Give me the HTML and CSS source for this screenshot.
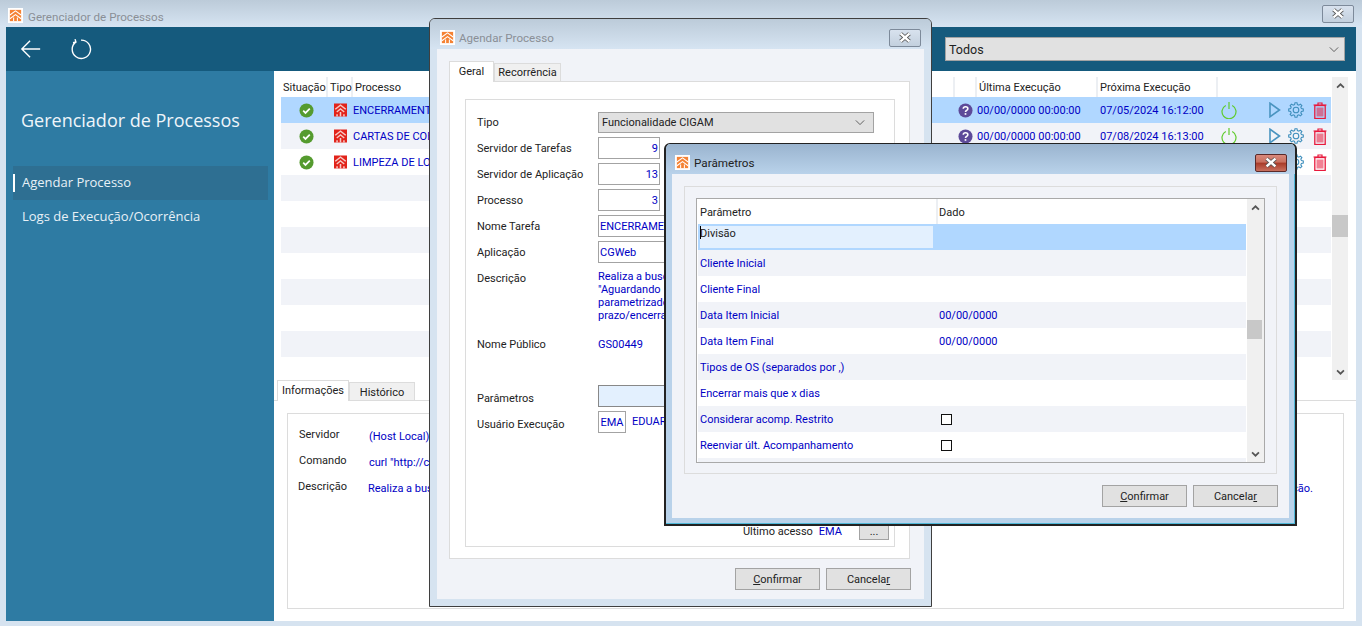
FILE: index.html
```html
<!DOCTYPE html>
<html lang="pt">
<head>
<meta charset="utf-8">
<title>Gerenciador de Processos</title>
<link rel="stylesheet" href="styles.css">
</head>
<body>
<svg class="defs" width="0" height="0" aria-hidden="true">
  <symbol id="logo" viewBox="0 0 16 16">
    <rect x="2" y="2" width="12" height="12" fill="#f58233"/>
    <path d="M2 7.500 8 3l6 4.500M2 11.500l6-4.500 6 4.500M6 10v4M10 10v4" fill="none" stroke="#fff" stroke-width="1.100"/>
  </symbol>
  <symbol id="house" viewBox="0 0 17 17">
    <rect width="17" height="17" fill="#e2231a"/>
    <path d="M8.500 1 1 7l1.300 1.300 6.200-5 6.200 5L16 7zM8.500 6 3 10.500l1.200 1.200 4.300-3.400 4.300 3.400 1.200-1.200zM7.500 11h2v6h-2zM3 14h2v3H3zM12 14h2v3h-2z" fill="#f6c9c5"/>
  </symbol>
  <symbol id="ok" viewBox="0 0 16 16">
    <circle cx="8" cy="8" r="7.500" fill="#559b2f"/>
    <path d="m4.500 8.200 2.400 2.400 4.600-4.600" fill="none" stroke="#fff" stroke-width="1.800"/>
  </symbol>
  <symbol id="q" viewBox="0 0 16 16">
    <circle cx="8" cy="8" r="7.500" fill="#5d4a99"/>
    <path d="M5.600 6.200C5.700 4.600 6.800 4 8 4c1.400 0 2.500.8 2.500 2.100 0 1.900-2.500 1.800-2.500 3.600" fill="none" stroke="#fff" stroke-width="1.700"/>
    <rect x="7.100" y="10.800" width="1.800" height="1.800" fill="#fff"/>
  </symbol>
  <symbol id="power" viewBox="0 0 16 18">
    <path d="M4.800 4.500a7 7 0 1 0 6.400 0M8 1v7" fill="none" stroke="#5fcb2c" stroke-width="1.200"/>
  </symbol>
  <symbol id="play" viewBox="0 0 12 16">
    <path d="M1 1.200 10.500 8 1 14.800z" fill="none" stroke="#4a94c0" stroke-width="1.600"/>
  </symbol>
  <symbol id="gear" viewBox="0 0 16 16">
    <path d="M6.600 2.600 7 .7h2l.4 1.900 1.430.59 1.620-1.060 1.420 1.420-1.060 1.620.59 1.430 1.900.4v2l-1.900.4-.59 1.430 1.060 1.620-1.420 1.420-1.620-1.060-1.430.59-.4 1.900H7l-.4-1.900-1.430-.59-1.620 1.060-1.420-1.420 1.060-1.620-.59-1.430-1.900-.4V7l1.900-.4.59-1.430-1.060-1.620 1.420-1.420 1.620 1.060z" fill="none" stroke="#3f8fbd" stroke-width="1.100"/>
    <circle cx="8" cy="8" r="2.800" fill="none" stroke="#3f8fbd" stroke-width="1.100"/>
  </symbol>
  <symbol id="trash" viewBox="0 0 14 17">
    <path d="M.5 3h13M5 3V1h4v2" fill="none" stroke="#e8193c" stroke-width="1.200"/>
    <rect x="1.800" y="3.500" width="10.400" height="13" fill="none" stroke="#e8193c" stroke-width="1.300"/>
    <rect x="3.500" y="5.500" width="7" height="9" fill="#e8193c" opacity=".55"/>
  </symbol>
  <symbol id="chev" viewBox="0 0 12 8">
    <path d="m1 1.500 5 5 5-5" fill="none" stroke="#555" stroke-width="1.100"/>
  </symbol>
  <symbol id="sb" viewBox="0 0 10 7">
    <path d="m1 5.500 4-4 4 4" fill="none" stroke="#555" stroke-width="2"/>
  </symbol>
  <symbol id="x" viewBox="0 0 14 10">
    <path d="m3 1.500 8 7m0-7-8 7" fill="none" stroke="#555" stroke-width="3.600"/>
    <path d="m3 1.500 8 7m0-7-8 7" fill="none" stroke="#fff" stroke-width="2.200"/>
  </symbol>
</svg>

<div class="desk">
  <main class="main">
    <header class="titlebar">
      <span class="logo"><svg class="ic-logo"><use href="#logo"/></svg></span>
      <span class="title-dim">Gerenciador de Processos</span>
      <button class="close-btn main-close"><svg class="ic-x"><use href="#x"/></svg></button>
    </header>
    <div class="topbar">
      <svg class="nav-ic" viewBox="0 0 24 24"><path d="M22 12H2M11 3l-9 9 9 9" fill="none" stroke="#fff" stroke-width="1.500"/></svg>
      <svg class="nav-ic reload" viewBox="0 0 24 24"><path d="M6.500 4.200A10 10 0 1 0 12 2.300M5.500 1.200l1 3.200-3.200.8" fill="none" stroke="#fff" stroke-width="1.500"/></svg>
      <div class="combo todos"><span>Todos</span><svg class="chev"><use href="#chev"/></svg></div>
    </div>
    <div class="body-row">
      <aside class="sidebar">
        <h1 class="side-title">Gerenciador de Processos</h1>
        <nav class="side-nav">
          <a class="side-item active">Agendar Processo</a>
          <a class="side-item">Logs de Execução/Ocorrência</a>
        </nav>
      </aside>
      <section class="content">
        <div class="table-wrap">
          <div class="ptable">
            <div class="prow phead">
              <span class="c-sit">Situação</span><span class="c-tipo">Tipo</span><span class="c-proc">Processo</span><span class="c-q"></span><span class="c-ult">Última Execução</span><span class="c-prox">Próxima Execução</span><span class="c-act"></span>
            </div>
            <div class="prow sel">
              <span class="c-sit"><svg class="ic-ok"><use href="#ok"/></svg></span><span class="c-tipo"><svg class="ic-house"><use href="#house"/></svg></span><span class="c-proc val">ENCERRAMENTO DE OS</span><span class="c-q"><svg class="ic-ok"><use href="#q"/></svg></span><span class="c-ult val">00/00/0000 00:00:00</span><span class="c-prox val">07/05/2024 16:12:00</span>
              <span class="c-act"><svg class="i-power"><use href="#power"/></svg><svg class="i-play"><use href="#play"/></svg><svg class="i-gear"><use href="#gear"/></svg><svg class="i-trash"><use href="#trash"/></svg></span>
            </div>
            <div class="prow alt">
              <span class="c-sit"><svg class="ic-ok"><use href="#ok"/></svg></span><span class="c-tipo"><svg class="ic-house"><use href="#house"/></svg></span><span class="c-proc val">CARTAS DE COBRANÇA</span><span class="c-q"><svg class="ic-ok"><use href="#q"/></svg></span><span class="c-ult val">00/00/0000 00:00:00</span><span class="c-prox val">07/08/2024 16:13:00</span>
              <span class="c-act"><svg class="i-power"><use href="#power"/></svg><svg class="i-play"><use href="#play"/></svg><svg class="i-gear"><use href="#gear"/></svg><svg class="i-trash"><use href="#trash"/></svg></span>
            </div>
            <div class="prow">
              <span class="c-sit"><svg class="ic-ok"><use href="#ok"/></svg></span><span class="c-tipo"><svg class="ic-house"><use href="#house"/></svg></span><span class="c-proc val">LIMPEZA DE LOGS</span><span class="c-q"></span><span class="c-ult"></span><span class="c-prox"></span>
              <span class="c-act"><svg class="i-power hide"><use href="#power"/></svg><svg class="i-play hide"><use href="#play"/></svg><svg class="i-gear"><use href="#gear"/></svg><svg class="i-trash"><use href="#trash"/></svg></span>
            </div>
            <div class="prow alt"></div><div class="prow"></div><div class="prow alt"></div><div class="prow"></div><div class="prow alt"></div><div class="prow"></div><div class="prow alt"></div>
          </div>
          <div class="scrollbar main-sb">
            <svg class="sb-ic"><use href="#sb"/></svg>
            <div class="thumb main-thumb"></div>
            <svg class="sb-ic down"><use href="#sb"/></svg>
          </div>
        </div>
        <div class="tabs info-tabs">
          <span class="tab on t-info">Informações</span><span class="tab t-hist">Histórico</span>
        </div>
        <div class="info-body">
          <div class="info-panel">
            <div class="info-row"><span class="info-lab">Servidor</span><span class="val">(Host Local)</span></div>
            <div class="info-row"><span class="info-lab">Comando</span><span class="val">curl "http://cgweb</span></div>
            <div class="info-row spread"><span class="info-lab">Descrição</span><span class="val grow">Realiza a busca</span><span class="val">ção.</span></div>
          </div>
        </div>
      </section>
    </div>
  </main>

  <div class="win win-agenda">
    <header class="win-title dim">
      <span class="logo"><svg class="ic-logo"><use href="#logo"/></svg></span>
      <span class="title-dim">Agendar Processo</span>
      <button class="close-btn"><svg class="ic-x"><use href="#x"/></svg></button>
    </header>
    <div class="win-body agenda-body">
      <div class="tabs agenda-tabs"><span class="tab on t-geral">Geral</span><span class="tab t-rec">Recorrência</span></div>
      <div class="tab-panel">
        <div class="group form">
          <div class="f-row"><label>Tipo</label><div class="combo tipo"><span>Funcionalidade CIGAM</span><svg class="chev"><use href="#chev"/></svg></div></div>
          <div class="f-row"><label>Servidor de Tarefas</label><div class="inp num">9</div></div>
          <div class="f-row"><label>Servidor de Aplicação</label><div class="inp num">13</div></div>
          <div class="f-row"><label>Processo</label><div class="inp num">3</div></div>
          <div class="f-row"><label>Nome Tarefa</label><div class="inp wide">ENCERRAMENTO</div></div>
          <div class="f-row"><label>Aplicação</label><div class="inp wide">CGWeb</div></div>
          <div class="f-row desc"><label>Descrição</label><div class="val lines">Realiza a busca<br>"Aguardando<br>parametrizado<br>prazo/encerra</div></div>
          <div class="f-row pub"><label>Nome Público</label><div class="val">GS00449</div></div>
          <div class="f-row low"><label>Parâmetros</label><div class="inp wide lit"></div></div>
          <div class="f-row low"><label>Usuário Execução</label><div class="inp ema">EMA</div><span class="val eduar">EDUARDO</span></div>
          <div class="last"><span>Último acesso</span><span class="val">EMA</span><button class="btn dots">...</button></div>
        </div>
      </div>
      <div class="actions"><button class="btn"><u>C</u>onfirmar</button><button class="btn">Cancela<u>r</u></button></div>
    </div>
  </div>

  <div class="win win-par">
    <header class="win-title">
      <span class="logo"><svg class="ic-logo"><use href="#logo"/></svg></span>
      <span class="title-on">Parâmetros</span>
      <button class="close-btn red"><svg class="ic-x"><use href="#x"/></svg></button>
    </header>
    <div class="win-body par-body">
      <div class="group par-group">
        <div class="pgrid">
          <div class="pg-main">
            <div class="pg-head"><span class="pg-a">Parâmetro</span><span class="pg-b">Dado</span></div>
            <div class="pg-row sel"><span class="pg-a editing"><i class="caret"></i>Divisão</span></div>
            <div class="pg-row alt"><span class="pg-a">Cliente Inicial</span></div>
            <div class="pg-row"><span class="pg-a">Cliente Final</span></div>
            <div class="pg-row alt"><span class="pg-a">Data Item Inicial</span><span class="pg-b">00/00/0000</span></div>
            <div class="pg-row"><span class="pg-a">Data Item Final</span><span class="pg-b">00/00/0000</span></div>
            <div class="pg-row alt"><span class="pg-a">Tipos de OS (separados por ,)</span></div>
            <div class="pg-row"><span class="pg-a">Encerrar mais que x dias</span></div>
            <div class="pg-row alt"><span class="pg-a">Considerar acomp. Restrito</span><span class="pg-c"><i class="check"></i></span></div>
            <div class="pg-row"><span class="pg-a">Reenviar últ. Acompanhamento</span><span class="pg-c"><i class="check"></i></span></div>
            <div class="pg-row alt"></div>
          </div>
          <div class="scrollbar par-sb">
            <svg class="sb-ic"><use href="#sb"/></svg>
            <div class="thumb par-thumb"></div>
            <svg class="sb-ic down"><use href="#sb"/></svg>
          </div>
        </div>
      </div>
      <div class="actions"><button class="btn"><u>C</u>onfirmar</button><button class="btn">Cancela<u>r</u></button></div>
    </div>
  </div>
</div>
</body>
</html>
```
FILE: styles.css
```css
* { box-sizing: border-box; }
html, body { margin: 0; height: 100%; overflow: hidden; }
body { font: 11px/16px Roboto, "Open Sans", sans-serif; color: #222; background: #d6e3f0; }
.defs { position: absolute; }
svg { display: block; }
.desk { position: relative; width: 1362px; height: 626px; overflow: hidden; }
.val { color: #0000c4; }
.ic-logo { width: 15px; height: 15px; }
.ic-ok { width: 15px; height: 15px; }
.ic-x { width: 16px; height: 11px; }

/* main window */
.main { display: flex; flex-direction: column; height: 626px; padding: 0 6px 5px; }
.titlebar { display: flex; align-items: center; height: 27px; margin: 0 -6px; padding: 3px 8px 0 8px; background: linear-gradient(#bccbd9, #d6e4f2); flex: none; }
.titlebar .title-dim { margin: 4px 0 0 5px; }
.logo { display: flex; align-items: center; justify-content: center; width: 15px; height: 15px; background: #fff; flex: none; }
.title-dim { color: #8a8f96; margin-left: 4px; font-size: 11.600px; }
.title-on { color: #222; margin-left: 4px; font-size: 11.700px; }
.close-btn { display: flex; align-items: center; justify-content: center; margin-left: auto; width: 32px; height: 18px; padding: 0; border: 1px solid #7d8a9a; border-radius: 2px; background: linear-gradient(#d8e2ee, #c3d0de); }
.main-close { margin-top: -3px; }
.topbar { display: flex; align-items: center; height: 44px; background: #155a7d; padding: 0 11px 0 14px; flex: none; }
.nav-ic { width: 22px; height: 22px; }
.reload { margin-left: 28px; }
.combo { display: flex; align-items: center; justify-content: space-between; background: #e1e1e1; border: 1px solid #a3a3a3; color: #222; }
.combo span { padding-top: 2px; }
.chev { width: 10px; height: 7px; }
.todos { width: 400px; height: 24px; margin-left: auto; padding: 0 5px 0 3px; font-size: 12.500px; }
.body-row { display: flex; flex: 1; min-height: 0; }
.sidebar { width: 268px; background: #2e7ba3; padding: 36px 0 0 7px; flex: none; color: #fff; font-family: "Open Sans", sans-serif; }
.side-title { font-weight: 400; font-size: 18px; line-height: 26px; margin: 0 0 33px 8px; color: #eef5fa; }
.side-nav { display: flex; flex-direction: column; margin-right: 6px; }
.side-item { display: flex; align-items: center; height: 34px; padding: 0 0 2px 9px; font-size: 13px; color: #e8f1f7; position: relative; }
.side-item.active { background: #2e6f92; }
.side-item.active::before { content: ""; position: absolute; left: 0; top: 8px; height: 18px; width: 2px; background: #fff; }
.content { flex: 1; min-width: 0; background: #fff; display: flex; flex-direction: column; }
.table-wrap { display: flex; height: 309px; padding: 6px 8px 0 7px; flex: none; }
.ptable { width: 1050px; flex: none; overflow: hidden; }
.prow { display: flex; align-items: center; height: 26px; background: #fff; }
.prow.alt { background: #f1f3f8; }
.prow.sel { background: #b0d7ff; }
.prow .val { padding-top: 2px; }
.phead { height: 20px; }
.phead span { height: 20px; border-right: 2px solid #eceff3; line-height: 22px; }
.phead .c-act { border: 0; }
.c-sit { width: 47px; padding-left: 2px; display: flex; justify-content: center; flex: none; }
.phead .c-sit { justify-content: flex-start; }
.prow .c-sit svg { margin-left: 1px; }
.c-tipo { width: 25px; padding-left: 2px; flex: none; }
.prow .c-tipo svg { margin-left: 4px; }
.c-proc { width: 602px; flex: none; white-space: nowrap; overflow: hidden; }
.phead .c-proc { padding-left: 2px; }
.c-q { width: 22px; flex: none; display: flex; justify-content: center; padding-right: 1px; }
.c-ult { width: 121px; flex: none; white-space: nowrap; }
.c-prox { width: 120px; padding-left: 2px; flex: none; white-space: nowrap; }
.phead .c-ult, .phead .c-prox { padding-left: 2px; }
.c-act { flex: 1; display: flex; align-items: center; }
.ic-house { width: 13px; height: 14px; }
.i-power { width: 16px; height: 18px; margin-left: 3px; }
.i-play { width: 12px; height: 16px; margin-left: 32px; }
.i-gear { width: 16px; height: 16px; margin-left: 7px; }
.i-trash { width: 14px; height: 17px; margin-left: 9px; }
.hide { visibility: hidden; }
.scrollbar { display: flex; flex-direction: column; align-items: center; background: #f0f0f0; flex: none; position: relative; }
.main-sb { width: 16px; margin-left: 1px; height: 303px; }
.sb-ic { width: 9px; height: 6px; margin-top: 6px; }
.sb-ic.down { transform: rotate(180deg); margin-top: auto; margin-bottom: 5px; }
.thumb { background: #c8c8c8; width: 100%; position: absolute; left: 0; }
.main-thumb { top: 138px; height: 22px; }
.tabs { display: flex; align-items: flex-end; flex: none; }
.tab { display: block; height: 18px; line-height: 17px; text-align: center; background: #f0f0f0; border: 1px solid #dcdcdc; border-bottom: 0; }
.tab.on { height: 21px; padding-top: 1px; background: #fff; margin-bottom: -1px; position: relative; z-index: 1; }
.t-info { width: 72px; }
.t-hist { width: 66px; padding-top: 1px; }
.t-geral { width: 45px; }
.t-rec { width: 67px; }
.info-tabs { height: 20px; padding-left: 3px; }
.info-body { flex: 1; border-top: 1px solid #dcdcdc; padding: 12px 12px 12px 13px; }
.info-panel { height: 100%; border: 1px solid #dcdcdc; padding: 14px 0 0 11px; display: flex; flex-direction: column; gap: 10px; }
.info-row { display: flex; height: 16px; }
.info-row .val { margin-top: 1px; }
.info-lab { width: 70px; flex: none; margin-top: -1px; }
.grow { flex: 1; }
.spread { padding-right: 30px; margin-left: -1px; }

/* dialogs */
.win { position: absolute; display: flex; flex-direction: column; border: 1px solid #3f3f3f; border-radius: 6px 6px 0 0; padding: 0 7px 7px; }
.win-agenda { left: 429px; top: 18px; width: 503px; height: 589px; background: #d6e3f0; }
.win-par { left: 664px; top: 143px; width: 633px; height: 383px; padding: 0 6px 6px; background: #b9d2ea; border-color: #222; border-width: 1px 2px 2px; box-shadow: inset -1px -1px 0 #4fb8d8; }
.win-title { display: flex; align-items: center; height: 30px; margin: 0 -7px; padding: 7px 9px 0 10px; flex: none; background: linear-gradient(#9ab4cf, #b9d2ea); border-radius: 5px 5px 0 0; }
.win-par .win-title { margin: 0 -6px; padding: 7px 8px 0 9px; }
.win-title.dim { background: linear-gradient(#bccbd9, #d6e4f2); }
.win-agenda .close-btn { margin-right: 1px; }
.close-btn.red { border-color: #5a2a2a; background: linear-gradient(#d9897c 0, #c8705f 45%, #a83a28 50%, #c8705f 100%); }
.win-body { flex: 1; background: #f1f3f8; display: flex; flex-direction: column; min-height: 0; }
.agenda-body { padding: 12px 14px 9px 12px; }
.agenda-body .actions { margin-right: -1px; }
.agenda-tabs { height: 20px; }
.tab-panel { flex: 1; background: #fff; border: 1px solid #dcdcdc; padding: 17px 14px 11px 15px; min-height: 0; }
.group { border: 1px solid #dcdcdc; }
.form { position: relative; height: 100%; padding: 9px 0 0 11px; }
.f-row { display: flex; align-items: center; height: 26px; }
.f-row label { width: 121px; flex: none; padding-top: 2px; }
.inp { height: 22px; border: 1px solid #a3a3a3; background: #fff; color: #0000c4; line-height: 22px; padding: 0 1px; white-space: nowrap; overflow: hidden; }
.num { width: 62px; text-align: right; }
.wide { width: 276px; }
.lit { background: #e3f0fe; border-color: #888; }
.ema { width: 28px; text-align: center; }
.eduar { margin-left: 6px; padding-bottom: 1px; }
.low label { margin-top: 4px; }
.combo.tipo { width: 276px; height: 21px; padding: 0 8px 0 3px; }
.desc { height: 70px; align-items: flex-start; }
.desc .lines { line-height: 13px; margin-top: 5px; }
.desc label { margin-top: 5px; padding-top: 1px; }
.pub { height: 48px; align-items: flex-start; padding-top: 1px; }
.pub label { padding-top: 1px; }
.pub .val { padding-top: 1px; }
.last { position: absolute; right: 5px; bottom: 6px; display: flex; align-items: center; gap: 6px; }
.btn { font: inherit; color: #222; background: #e1e1e1; border: 1px solid #a3a3a3; width: 85px; height: 22px; padding: 2px 0 0; }
.btn.dots { width: 30px; height: 17px; line-height: 12px; margin-left: 11px; padding: 0; }
.actions { display: flex; justify-content: flex-end; gap: 6px; flex: none; margin-top: 9px; }
.par-body { padding: 12px 12px 11px; }
.par-group { flex: 1; padding: 11px 11px 10px; min-height: 0; }
.pgrid { display: flex; height: 100%; border: 1px solid #a9a9a9; background: #fff; padding: 0 0 0 1px; }
.pg-main { flex: 1; min-width: 0; overflow: hidden; }
.pg-head { display: flex; height: 25px; align-items: center; }
.pg-head .pg-a, .pg-head .pg-b { height: 25px; line-height: 27px; padding-top: 0; }
.pg-head .pg-a { border-right: 2px solid #eceff3; }
.pg-row { display: flex; align-items: center; height: 26px; background: #fff; }
.pg-row.alt { background: #f1f3f8; }
.pg-row.sel { background: #b0d7ff; }
.pg-a { width: 240px; padding: 2px 0 0 2px; color: #0000c4; flex: none; white-space: nowrap; }
.pg-head .pg-a, .pg-head .pg-b { color: #222; }
.pg-b { padding: 2px 0 0 1px; color: #0000c4; }
.pg-c { padding-left: 1px; }
.pg-a.editing { position: relative; width: 233px; margin-right: 5px; margin-left: 2px; height: 22px; background: #e3f0fe; color: #222; line-height: 14px; padding: 1px 0 0; }
.caret { position: absolute; left: 0; top: 0; width: 1px; height: 13px; background: #000; }
.check { display: block; width: 11px; height: 11px; margin-left: 2px; border: 1px solid #111; background: #fff; }
.par-sb { width: 17px; margin-left: 1px; }
.par-thumb { top: 121px; height: 19px; width: 15px; }
.par-body .actions { margin-top: 11px; margin-right: -1px; }
```
